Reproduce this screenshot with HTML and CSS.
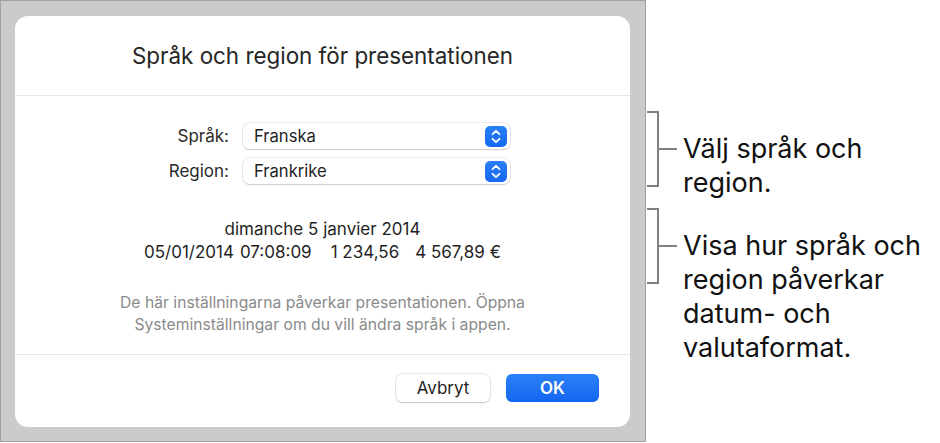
FILE: index.html
```html
<!DOCTYPE html>
<html lang="sv">
<head>
<meta charset="utf-8">
<title>Språk och region</title>
<link rel="stylesheet" href="styles.css">
</head>
<body>
<div class="page">
  <div class="backdrop">
    <div class="dialog">
      <div class="header">Språk och region för presentationen</div>
      <div class="body">
        <div class="form">
          <label class="label">Språk:</label>
          <div class="popup"><span>Franska</span><span class="stepper"><svg viewBox="0 0 22 21" width="22" height="21"><path d="M7.5 8.2 L11 4.8 L14.5 8.2 M7.5 12.8 L11 16.2 L14.5 12.8" fill="none" stroke="#fff" stroke-width="1.8" stroke-linecap="round" stroke-linejoin="round"/></svg></span></div>
          <label class="label">Region:</label>
          <div class="popup"><span>Frankrike</span><span class="stepper"><svg viewBox="0 0 22 21" width="22" height="21"><path d="M7.5 8.2 L11 4.8 L14.5 8.2 M7.5 12.8 L11 16.2 L14.5 12.8" fill="none" stroke="#fff" stroke-width="1.8" stroke-linecap="round" stroke-linejoin="round"/></svg></span></div>
        </div>
        <div class="sample">
          <div>dimanche 5 janvier 2014</div>
          <div><span>05/01/2014</span><span class="s1">07:08:09</span><span class="s2">1 234,56</span><span class="s3">4 567,89 €</span></div>
        </div>
        <div class="note">De här inställningarna påverkar presentationen. Öppna<br>Systeminställningar om du vill ändra språk i appen.</div>
      </div>
      <div class="footer">
        <button class="btn">Avbryt</button>
        <button class="btn primary">OK</button>
      </div>
    </div>
  </div>
  <div class="callouts">
    <div class="callout one">
      <svg class="bracket" viewBox="0 0 32 76" width="32" height="76"><path d="M1 1 H12 V75 H1 M12 38 H31" fill="none" stroke="#808080" stroke-width="2"/></svg>
      <div class="ctext">Välj språk och<br>region.</div>
    </div>
    <div class="callout two">
      <svg class="bracket" viewBox="0 0 32 76" width="32" height="76"><path d="M1 1 H12 V75 H1 M12 38 H31" fill="none" stroke="#808080" stroke-width="2"/></svg>
      <div class="ctext">Visa hur språk och<br>region påverkar<br>datum- och<br>valutaformat.</div>
    </div>
  </div>
</div>
</body>
</html>
```
FILE: styles.css
```css
* { box-sizing: border-box; }
html, body { margin: 0; padding: 0; background: #fff; }
body { font-family: Inter, "Helvetica Neue", Arial, sans-serif; color: #1f1f1f; }
.page { display: flex; width: 940px; height: 443px; }
.backdrop {
  width: 646px; height: 442px; flex: none;
  background: #cbcbcb;
  border: 1px solid #a2a2a2;
  padding: 15px 15px 14px 14px;
}
.dialog {
  width: 615px; height: 411px;
  background: #fff; border-radius: 13px;
  display: flex; flex-direction: column;
}
.header {
  height: 80px; border-bottom: 1px solid #e6e6e6;
  display: flex; align-items: center; justify-content: center;
  font-size: 22.4px; color: #262626; padding-bottom: 1px;
}
.body { height: 259px; border-bottom: 1px solid #e6e6e6; padding-top: 27px; }
.form {
  display: grid; grid-template-columns: 214px 267px; column-gap: 14px; row-gap: 9px;
  align-items: center;
}
.label { text-align: right; font-size: 17px; color: #2a2a2a; }
.popup {
  height: 26px; border-radius: 6px; background: #fff;
  box-shadow: 0 0 0 0.5px rgba(0,0,0,0.14), 0 1px 1.5px rgba(0,0,0,0.14);
  display: flex; align-items: center; justify-content: space-between;
  padding: 0 3px 0 11px; font-size: 16.6px; color: #1f1f1f;
}
.stepper {
  width: 22px; height: 21px; border-radius: 5px;
  background: linear-gradient(#2a7ff8, #1669f2);
  display: flex;
}
.sample { margin-top: 34px; text-align: center; font-size: 17px; line-height: 23px; color: #1f1f1f; }
.s1 { margin-left: 6px; }
.s2 { margin-left: 19px; }
.s3 { margin-left: 16px; }
.note { margin-top: 28px; text-align: center; font-size: 15.7px; line-height: 22px; color: #8a8a8a; }
.footer { flex: 1; display: flex; justify-content: flex-end; align-items: flex-start; gap: 16px; padding: 19px 31px 0 0; }
.btn {
  font-family: inherit; font-size: 17px; width: 94px; height: 28px; border: none; border-radius: 6px;
  background: #fff; color: #1f1f1f; padding: 0;
  box-shadow: 0 0 0 0.5px rgba(0,0,0,0.16), 0 1px 1.5px rgba(0,0,0,0.16);
}
.btn.primary { width: 93px; background: linear-gradient(#2b80f8, #1366f0); color: #fff; font-weight: 600; box-shadow: none; }
.callouts { display: flex; flex-direction: column; padding-top: 111px; gap: 8px; }
.callout { display: flex; align-items: flex-start; }
.bracket { flex: none; display: block; }
.ctext { margin-left: 5px; margin-top: 21px; font-size: 27px; line-height: 34px; color: #111; white-space: nowrap; }
.callout.one { height: 89px; }
```
